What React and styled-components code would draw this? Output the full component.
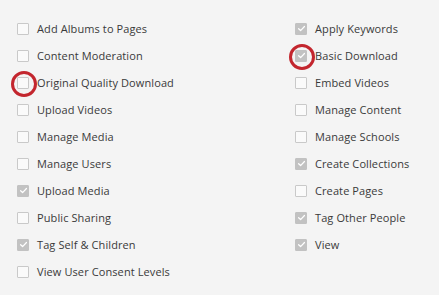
import styled, { createGlobalStyle } from 'styled-components'

const GlobalStyle = createGlobalStyle`
  html, body {
    margin: 0;
    padding: 0;
    background: #f4f4f4;
  }
`

const leftItems = [
  { label: 'Add Albums to Pages' },
  { label: 'Content Moderation' },
  { label: 'Original Quality Download', marked: true },
  { label: 'Upload Videos' },
  { label: 'Manage Media' },
  { label: 'Manage Users' },
  { label: 'Upload Media', checked: true },
  { label: 'Public Sharing' },
  { label: 'Tag Self & Children', checked: true },
  { label: 'View User Consent Levels' }
]

const rightItems = [
  { label: 'Apply Keywords', checked: true },
  { label: 'Basic Download', checked: true, marked: true },
  { label: 'Embed Videos' },
  { label: 'Manage Content' },
  { label: 'Manage Schools' },
  { label: 'Create Collections', checked: true },
  { label: 'Create Pages' },
  { label: 'Tag Other People', checked: true },
  { label: 'View', checked: true }
]

function Permission({ label, checked, marked }) {
  return (
    <Row>
      <Box $checked={checked} $marked={marked}>
        {checked && (
          <svg width="9" height="9" viewBox="0 0 10 10">
            <path d="M1.8 5.2 L4 7.3 L8.3 2.8" fill="none" stroke="#fff" strokeWidth="1.4" strokeLinecap="round" strokeLinejoin="round" />
          </svg>
        )}
      </Box>
      <Label>{label}</Label>
    </Row>
  )
}

export default function App() {
  return (
    <Page>
      <GlobalStyle />
      <Column>
        {leftItems.map(item => (
          <Permission key={item.label} {...item} />
        ))}
      </Column>
      <Column>
        {rightItems.map(item => (
          <Permission key={item.label} {...item} />
        ))}
      </Column>
    </Page>
  )
}

const Page = styled.div`
  width: 439px;
  height: 295px;
  box-sizing: border-box;
  padding: 15px 0 0 17px;
  display: grid;
  grid-template-columns: 278px 1fr;
  font-family: 'Open Sans', 'DejaVu Sans', sans-serif;
  overflow: hidden;
`

const Column = styled.div`
  display: flex;
  flex-direction: column;
`

const Row = styled.div`
  display: flex;
  align-items: center;
  gap: 8px;
  height: 27px;
`

const Box = styled.span`
  position: relative;
  box-sizing: border-box;
  width: 12px;
  height: 12px;
  flex: none;
  border-radius: 1px;
  border: 1px solid ${p => (p.$checked ? '#c2c2c2' : '#c9c9c9')};
  background: ${p => (p.$checked ? '#c2c2c2' : '#fafafa')};
  display: flex;
  align-items: center;
  justify-content: center;

  ${p =>
    p.$marked &&
    `
    &::after {
      content: '';
      position: absolute;
      left: -7px;
      top: -7px;
      width: 20px;
      height: 20px;
      border: 3px solid #c3262e;
      border-radius: 50%;
    }
  `}
`

const Label = styled.span`
  font-size: 11px;
  font-weight: 500;
  color: #3a3a3a;
  letter-spacing: 0.1px;
  white-space: nowrap;
`
